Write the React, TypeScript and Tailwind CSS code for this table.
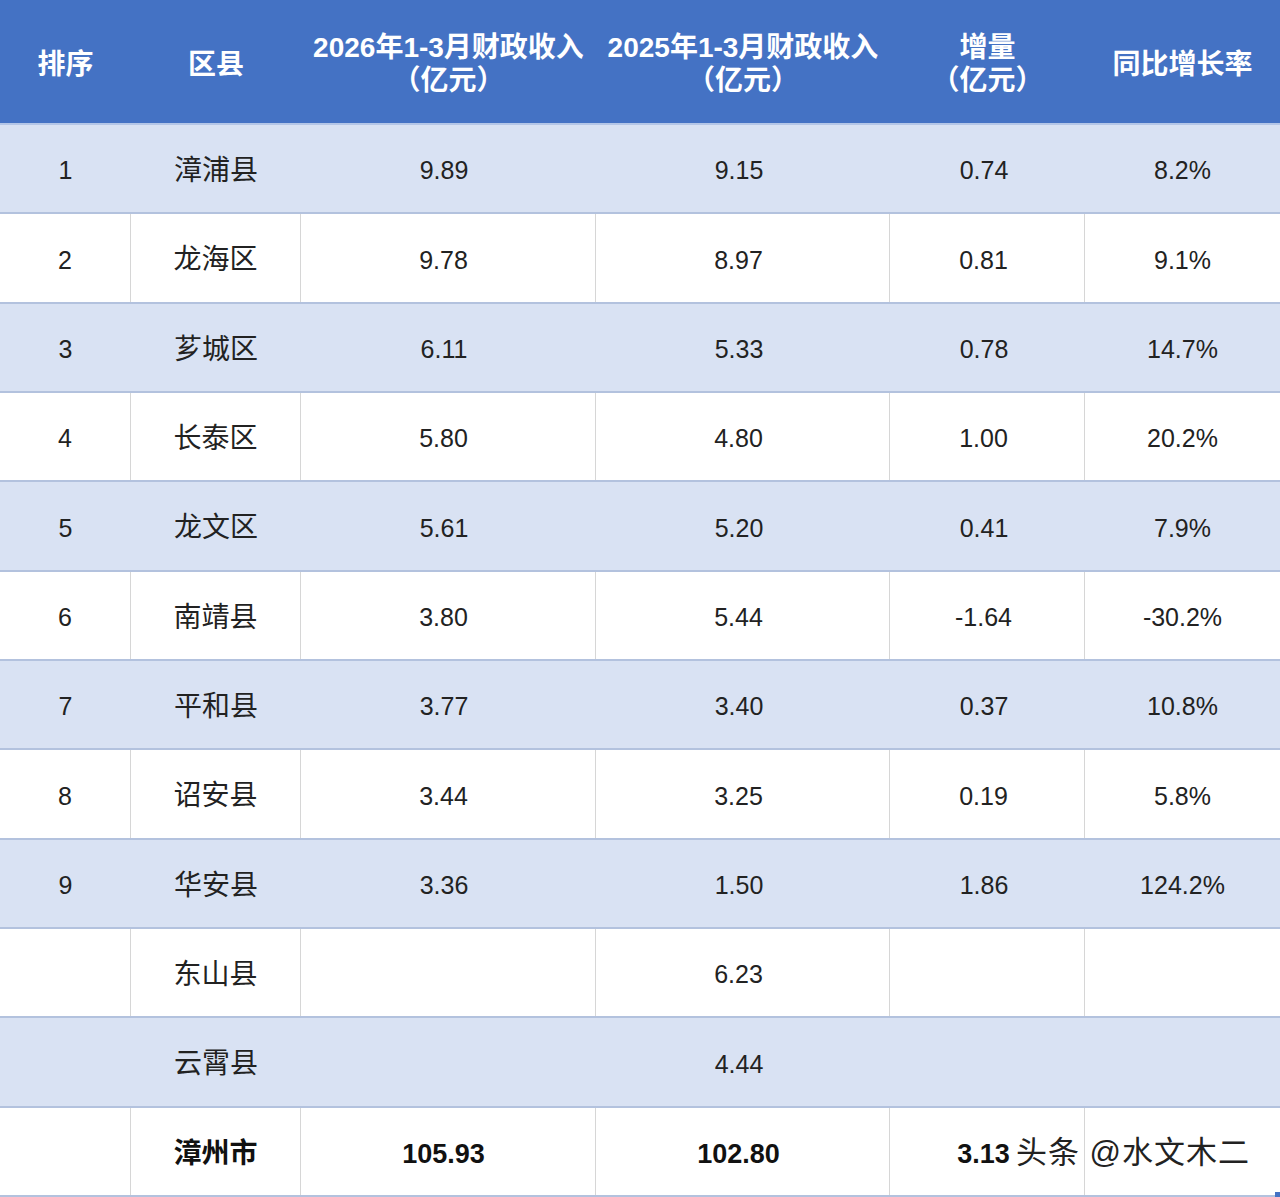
const rows: [string, string, string, string, string, string][] = [
  ["1", "漳浦县", "9.89", "9.15", "0.74", "8.2%"],
  ["2", "龙海区", "9.78", "8.97", "0.81", "9.1%"],
  ["3", "芗城区", "6.11", "5.33", "0.78", "14.7%"],
  ["4", "长泰区", "5.80", "4.80", "1.00", "20.2%"],
  ["5", "龙文区", "5.61", "5.20", "0.41", "7.9%"],
  ["6", "南靖县", "3.80", "5.44", "-1.64", "-30.2%"],
  ["7", "平和县", "3.77", "3.40", "0.37", "10.8%"],
  ["8", "诏安县", "3.44", "3.25", "0.19", "5.8%"],
  ["9", "华安县", "3.36", "1.50", "1.86", "124.2%"],
  ["", "东山县", "", "6.23", "", ""],
  ["", "云霄县", "", "4.44", "", ""],
];

const widths = ["w-[131px]", "w-[170px]", "w-[295px]", "w-[294px]", "w-[195px]", "w-[195px]"];
const nudge = ["", "", "pr-[9px]", "pr-[8px]", "pr-[7px]", ""];

const font = { fontFamily: '"Liberation Sans", "Noto Sans CJK SC", sans-serif' };

function Row({ cells, shaded, bold }: { cells: string[]; shaded: boolean; bold?: boolean }) {
  return (
    <div
      className={`flex border-b-2 border-[#b3c2de] ${shaded ? "bg-[#d9e2f3]" : "bg-white"}`}
    >
      {cells.map((c, i) => (
        <div
          key={i}
          className={`${widths[i]} ${nudge[i]} pt-[5px] flex items-center justify-center ${
            !shaded && i < 5 ? "border-r border-[#d6d6d6]" : ""
          } ${i === 1 ? "text-[28px]" : bold ? "text-[27px]" : "text-[25px]"} ${
            bold ? "font-bold text-[#111]" : "text-[#222]"
          }`}
        >
          {c}
        </div>
      ))}
    </div>
  );
}

export default function App() {
  return (
    <div className="relative w-[1280px] h-[1197px] overflow-hidden bg-white" style={font}>
      <div className="grid h-full grid-rows-[125px_repeat(12,1fr)]">
        <div className="flex bg-[#4472c4] border-b-2 border-[#b4c6e7] text-white font-bold text-[28px] leading-[33px]">
          <div className="w-[131px] flex items-center justify-center pt-[6px]">排序</div>
          <div className="w-[170px] flex items-center justify-center pt-[6px]">区县</div>
          <div className="w-[295px] flex flex-col items-center justify-center pt-[4px]">
            <span>2026年1-3月财政收入</span>
            <span>（亿元）</span>
          </div>
          <div className="w-[294px] flex flex-col items-center justify-center pt-[4px]">
            <span>2025年1-3月财政收入</span>
            <span>（亿元）</span>
          </div>
          <div className="w-[195px] flex flex-col items-center justify-center pt-[4px]">
            <span>增量</span>
            <span>（亿元）</span>
          </div>
          <div className="w-[195px] flex items-center justify-center pt-[6px]">同比增长率</div>
        </div>
        {rows.map((r, idx) => (
          <Row key={idx} cells={r} shaded={idx % 2 === 0} />
        ))}
        <Row cells={["", "漳州市", "105.93", "102.80", "3.13", ""]} shaded={false} bold />
      </div>
      <div
        className="absolute left-[1016px] top-[1130px] text-[31px] text-[#222] tracking-[1px] whitespace-nowrap"
        style={{ textShadow: "0 0 2px #fff, 1px 1px 0 #fff, -1px -1px 0 #fff" }}
      >
        头条 @水文木二
      </div>
      <div className="absolute right-0 bottom-0 w-[5px] h-[5px] bg-[#4472c4]" />
    </div>
  );
}
